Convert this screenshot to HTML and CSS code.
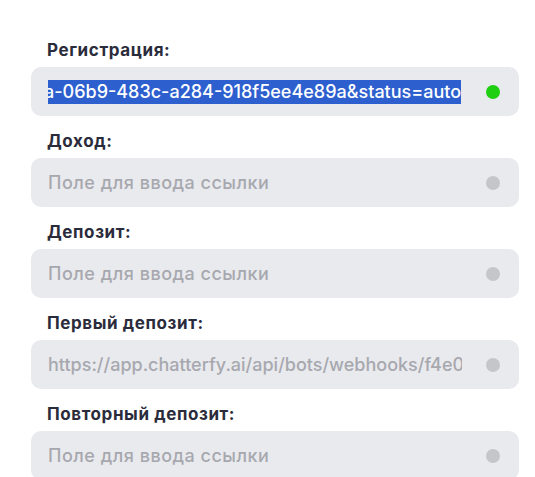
FILE: index.html
```html
<!DOCTYPE html>
<html lang="ru">
<head>
<meta charset="utf-8">
<link rel="stylesheet" href="styles.css">
</head>
<body>
<div class="form">
  <div class="field">
    <div class="label">Регистрация:</div>
    <div class="input">
      <div class="value latin"><span class="sel">a-06b9-483c-a284-918f5ee4e89a&amp;status=auto</span></div>
      <span class="dot ok"></span>
    </div>
  </div>
  <div class="field">
    <div class="label">Доход:</div>
    <div class="input">
      <div class="value placeholder">Поле для ввода ссылки</div>
      <span class="dot"></span>
    </div>
  </div>
  <div class="field">
    <div class="label">Депозит:</div>
    <div class="input">
      <div class="value placeholder">Поле для ввода ссылки</div>
      <span class="dot"></span>
    </div>
  </div>
  <div class="field">
    <div class="label">Первый депозит:</div>
    <div class="input">
      <div class="value placeholder latin">https://app.chatterfy.ai/api/bots/webhooks/f4e0c2a1-06b9</div>
      <span class="dot"></span>
    </div>
  </div>
  <div class="field">
    <div class="label">Повторный депозит:</div>
    <div class="input">
      <div class="value placeholder">Поле для ввода ссылки</div>
      <span class="dot"></span>
    </div>
  </div>
</div>
</body>
</html>
```
FILE: styles.css
```css
html, body {
  margin: 0;
  padding: 0;
  background: #ffffff;
  font-family: Inter, "Open Sans", sans-serif;
}
.form {
  padding: 40px 16px 0 31px;
  display: flex;
  flex-direction: column;
  gap: 15px;
  overflow: hidden;
  height: 437px;
}
.field {
  display: flex;
  flex-direction: column;
  gap: 7px;
}
.label {
  padding-left: 16px;
  font-size: 17px;
  line-height: 20px;
  font-weight: 700;
  letter-spacing: 0.6px;
  color: #2b2c3b;
}
.input {
  height: 49px;
  background: #e9eaee;
  border-radius: 10px;
  display: flex;
  align-items: center;
  padding: 0 19px 0 17px;
  gap: 24px;
}
.value {
  flex: 1;
  overflow: hidden;
  white-space: nowrap;
  font-size: 18px;
  line-height: 24px;
  font-weight: 500;
  letter-spacing: 0.5px;
  color: #2b2c3b;
}
.value.latin {
  letter-spacing: 0;
}
.placeholder {
  color: #a7a8ae;
}
.sel {
  background: #2d5fcf;
  color: #ffffff;
  display: inline-block;
  margin-left: -4px;
}
.dot {
  width: 14px;
  height: 14px;
  border-radius: 50%;
  background: #c5c6c9;
  flex: none;
}
.dot.ok {
  background: #1fcf12;
}
```
